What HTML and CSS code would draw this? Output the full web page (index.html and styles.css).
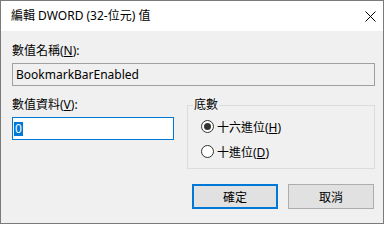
FILE: index.html
```html
<!DOCTYPE html>
<html lang="zh-Hant">
<head>
<meta charset="utf-8">
<title>編輯 DWORD (32-位元) 值</title>
<link rel="stylesheet" href="styles.css">
</head>
<body>
<div class="window">
  <div class="titlebar">
    <span class="title">編輯 DWORD (32-位元) 值</span>
    <svg class="close" width="11" height="11" viewBox="0 0 11 11"><path d="M0.5 0.5 L10.5 10.5 M10.5 0.5 L0.5 10.5" stroke="#000" stroke-width="1"/></svg>
  </div>
  <div class="content">
    <div class="label">數值名稱(<u>N</u>):</div>
    <div class="field readonly">BookmarkBarEnabled</div>
    <div class="row">
      <div class="col">
        <div class="label">數值資料(<u>V</u>):</div>
        <div class="field edit"><span class="sel">0</span></div>
      </div>
      <fieldset class="group">
        <legend>底數</legend>
        <div class="radios">
          <div class="radio-row"><span class="radio checked"></span><span>十六進位(<u>H</u>)</span></div>
          <div class="radio-row"><span class="radio"></span><span>十進位(<u>D</u>)</span></div>
        </div>
      </fieldset>
    </div>
    <div class="buttons">
      <div class="btn default">確定</div>
      <div class="btn">取消</div>
    </div>
  </div>
</div>
</body>
</html>
```
FILE: styles.css
```css
html, body {
  margin: 0;
  padding: 0;
  background: #ffffff;
}
body {
  font-family: "Segoe UI", "Noto Sans", "Noto Sans CJK TC", sans-serif;
  font-size: 12px;
  color: #000;
}
.window {
  box-sizing: border-box;
  width: 384px;
  height: 224px;
  border: 1px solid #7a7a7a;
  background: #f0f0f0;
  display: flex;
  flex-direction: column;
}
.titlebar {
  height: 30px;
  background: #ffffff;
  display: flex;
  align-items: center;
  justify-content: space-between;
  padding-left: 10px;
  padding-right: 7px;
  flex: none;
}
.title {
  line-height: 16px;
}
.close {
  display: block;
  margin-top: 0px;
}
.content {
  padding: 12px 8px 0 11px;
}
.label {
  line-height: 16px;
  height: 16px;
}
.field {
  box-sizing: border-box;
  height: 23px;
  margin-top: 4px;
  display: flex;
  align-items: center;
}
.readonly {
  border: 1px solid #a0a0a0;
  background: #f0f0f0;
  padding-left: 3px;
}
.edit {
  border: 1px solid #0078d7;
  background: #ffffff;
  padding-left: 1px;
}
.sel {
  display: inline-block;
  background: #0078d7;
  color: #ffffff;
  line-height: 14px;
  height: 14px;
  padding: 0 1px;
}
.row {
  margin-top: 11px;
  display: grid;
  grid-template-columns: 162px 188px;
  column-gap: 13px;
  align-items: start;
}
.group {
  margin: 0;
  padding: 0 0 4px 5px;
  border: 1px solid #dcdcdc;
  min-width: 0;
}
.group legend {
  padding: 0 1px;
  line-height: 16px;
}
.radios {
  margin-top: 1px;
  margin-left: 8px;
}
.radio-row {
  height: 25px;
  display: flex;
  align-items: center;
}
.radio {
  box-sizing: border-box;
  width: 13px;
  height: 13px;
  border: 1px solid #333333;
  border-radius: 50%;
  background: #ffffff;
  margin-right: 3px;
  display: flex;
  align-items: center;
  justify-content: center;
}
.radio.checked::after {
  content: "";
  width: 7px;
  height: 7px;
  border-radius: 50%;
  background: #333333;
}
.buttons {
  margin-top: 15px;
  display: flex;
  justify-content: flex-end;
  gap: 10px;
  padding-right: 1px;
}
.btn {
  box-sizing: border-box;
  width: 86px;
  height: 25px;
  border: 1px solid #adadad;
  background: #e1e1e1;
  display: flex;
  align-items: center;
  justify-content: center;
}
.btn.default {
  border: 2px solid #0078d7;
}
```
